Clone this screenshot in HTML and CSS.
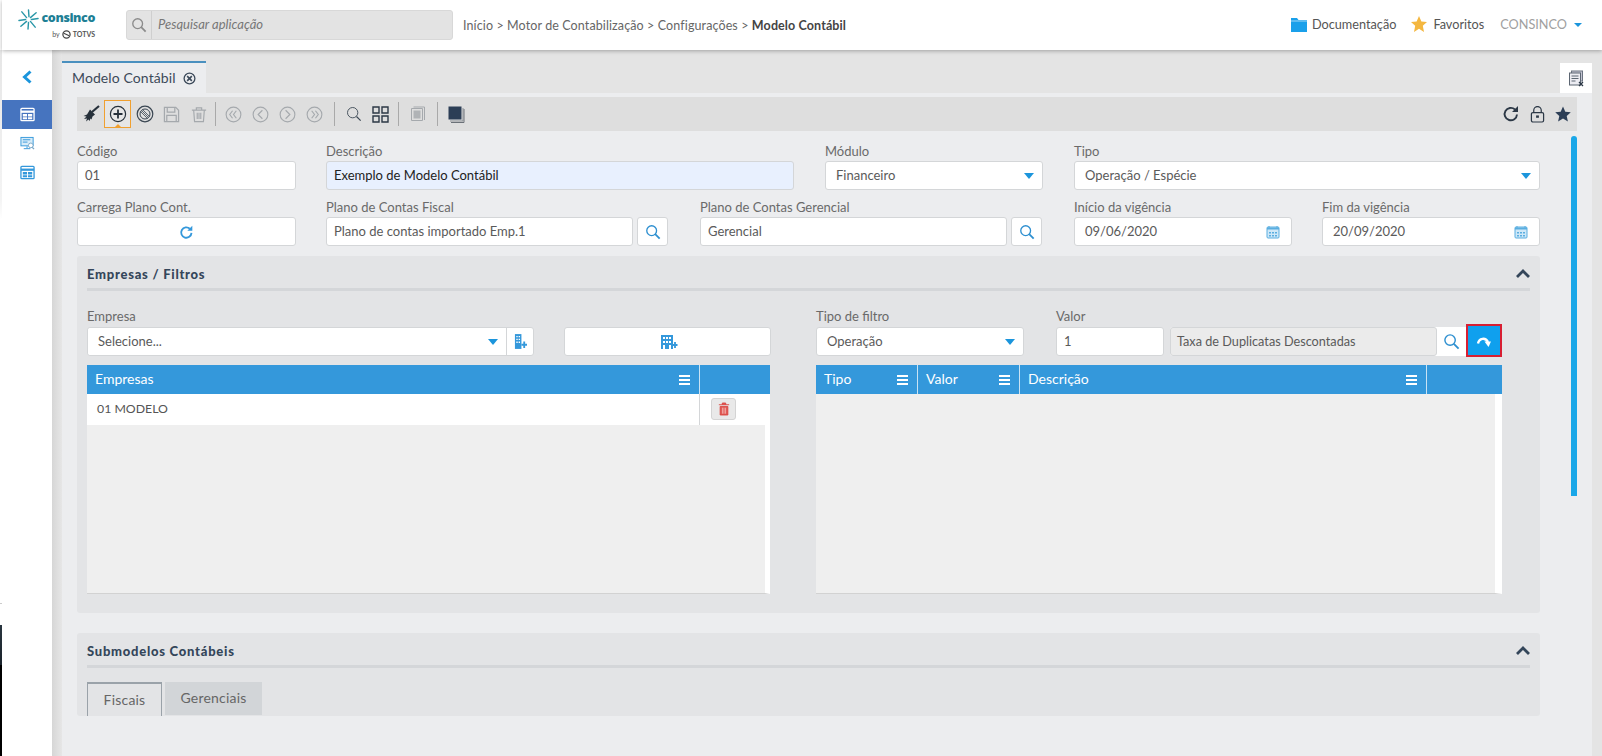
FILE: index.html
```html
<!DOCTYPE html>
<html lang="pt-BR">
<head>
<meta charset="utf-8">
<title>Modelo Contábil</title>
<link rel="stylesheet" href="styles.css">
</head>
<body>
<svg class="defs" aria-hidden="true">
  <symbol id="cal" viewBox="0 0 14 14"><rect x="1" y="2" width="12" height="11" rx="1" fill="#cfe8f8" stroke="#5aaee0"/><path d="M1 3.500h12" stroke="#5aaee0" stroke-width="2"/><path d="M3 1v2M11 1v2" stroke="#5aaee0"/><path d="M3 7h2v1.500H3zM6 7h2v1.500H6zM9 7h2v1.500H9zM3 10h2v1.500H3zM6 10h2v1.500H6zM9 10h2v1.500H9z" fill="#5aaee0"/></symbol>
  <symbol id="lupa" viewBox="0 0 18 18"><circle cx="7.500" cy="7.500" r="5.500" fill="none" stroke="currentColor" stroke-width="1.500"/><path d="M11.500 11.500l5 5" stroke="currentColor" stroke-width="2"/></symbol>
  <symbol id="caret" viewBox="0 0 12 7"><path d="M0 0h12L6 7z" fill="currentColor"/></symbol>
  <symbol id="menu" viewBox="0 0 11 10"><path d="M0 1h11M0 5h11M0 9h11" stroke="currentColor" stroke-width="1.800"/></symbol>
  <symbol id="up" viewBox="0 0 14 9"><path d="M1 8l6-6 6 6" fill="none" stroke="currentColor" stroke-width="2.800"/></symbol>
  <symbol id="tbl" viewBox="0 0 16 16"><rect x="1" y="1.500" width="14" height="13" rx="1" fill="none" stroke="currentColor" stroke-width="1.400"/><path d="M1 5h14" stroke="currentColor" stroke-width="2.400"/><path d="M3 7.500h4.500v2.500H3zM8.500 7.500H13v2.500H8.500zM3 11h4.500v2H3zM8.500 11H13v2H8.500z" fill="currentColor"/></symbol>
</svg>
<div class="strip"></div>
<div class="app">
  <header class="top">
    <div class="logo">
      <svg class="logo-mark" viewBox="0 0 22 22" width="21" height="21"><path d="M11 1l.5 7M11 14l-.5 7M1 12l7-1M14 11l7-1M4 3l5 6M13 13l5 6M19 4l-6 5M9 13l-6 5" stroke="#2a97a8" stroke-width="1.500" stroke-linecap="round"/></svg>
      <div class="logo-text">
        <span class="logo-name">consinco</span>
        <span class="logo-by">by <svg viewBox="0 0 10 10" width="9" height="9"><circle cx="5" cy="5" r="4" fill="none" stroke="#444" stroke-width="1.400"/><path d="M2 3.500l6 3" stroke="#444" stroke-width="1.200"/></svg> <b>TOTVS</b></span>
      </div>
    </div>
    <div class="search">
      <span class="search-ico"><svg width="16" height="16"><use href="#lupa"/></svg></span>
      <span class="search-ph">Pesquisar aplicação</span>
    </div>
    <nav class="crumbs">Início &gt; Motor de Contabilização &gt; Configurações &gt; <b>Modelo Contábil</b></nav>
    <div class="top-right">
      <svg class="folder" viewBox="0 0 16 14" width="16" height="14"><path d="M0 0h6l1.500 2H16v12H0z" fill="#1aa0ea"/><path d="M0 3h16" stroke="#fff" stroke-width=".6"/></svg>
      <span class="top-link">Documentação</span>
      <svg class="top-star" viewBox="0 0 16 16" width="16" height="16"><path d="M8 0l2.400 5.400 5.600.6-4.200 3.800L13 16 8 12.800 3 16l1.200-6.200L0 6l5.600-.6z" fill="#f4b740"/></svg>
      <span class="top-link">Favoritos</span>
      <span class="user">CONSINCO</span>
      <svg class="user-caret" viewBox="0 0 8 4" width="8" height="4"><path d="M0 0h8L4 4z" fill="currentColor"/></svg>
    </div>
  </header>
  <div class="main">
    <aside class="side">
      <div class="side-back"><svg viewBox="0 0 12 14" width="12" height="14"><path d="M9.500 1.500L3.500 7l6 5.500" fill="none" stroke="#1b95dc" stroke-width="3"/></svg></div>
      <div class="side-item active"><svg width="15" height="15"><use href="#tbl"/></svg></div>
      <div class="side-item"><svg viewBox="0 0 16 16" width="15" height="15"><rect x="1" y="1.500" width="13" height="9" fill="#d8ecf8" stroke="#3498db"/><path d="M3 4h8M3 6.500h5M4 13.500h7M7.500 11v2" stroke="#3498db"/><circle cx="11.500" cy="10" r="2.500" fill="#fff" stroke="#7aa7c7"/><path d="M13 12l2 2" stroke="#7aa7c7" stroke-width="1.400"/></svg></div>
      <div class="side-item"><svg width="15" height="15"><use href="#tbl"/></svg></div>
    </aside>
    <section class="work">
      <div class="tabstrip">
        <div class="tab">Modelo Contábil
          <svg viewBox="0 0 14 14" width="13" height="13"><circle cx="7" cy="7" r="5.800" fill="none" stroke="#3c4a5a" stroke-width="1.400"/><path d="M4.500 4.500l5 5M9.500 4.500l-5 5" stroke="#3c4a5a" stroke-width="1.700"/></svg>
        </div>
        <div class="closeall"><svg viewBox="0 0 17 17" width="17" height="17"><rect x="3.500" y="1" width="11" height="10" fill="#c4c4d2" stroke="#6a7280"/><rect x="1.500" y="3" width="11" height="12" fill="#ececf2" stroke="#5c6672"/><path d="M3.500 6h7M3.500 8.500h7M3.500 11h4" stroke="#5c6672"/><path d="M11 12l4 4M15 12l-4 4" stroke="#2c3846" stroke-width="1.300"/></svg></div>
      </div>
      <div class="sheet">
        <div class="toolbar">
          <button class="tb"><svg viewBox="0 0 18 18" width="18" height="18"><path d="M17 1l-7 6" stroke="#26303a" stroke-width="2.200"/><path d="M8 4.500l5 5-2.500 2-1 3-1-1-1 2.500-1-1.500-2.500 2 1-3-3 .5 2.500-2.500-3-.5 3.500-1.500z" fill="#26303a"/></svg></button>
          <button class="tb on"><svg viewBox="0 0 18 18" width="18" height="18"><circle cx="9" cy="9" r="7.600" fill="none" stroke="#26303a" stroke-width="1.200"/><path d="M9 4.500v9M4.500 9h9" stroke="#26303a" stroke-width="1.800"/></svg></button>
          <button class="tb"><svg viewBox="0 0 18 18" width="18" height="18"><circle cx="9" cy="9" r="7.800" fill="none" stroke="#3a4652" stroke-width="1.200"/><circle cx="9" cy="9" r="5" fill="none" stroke="#3a4652" stroke-width="1"/><path d="M5.500 5.500l7 7M6.500 4.500l7 7M4.500 6.500l7 7" stroke="#3a4652" stroke-width=".8"/></svg></button>
          <button class="tb"><svg viewBox="0 0 18 18" width="17" height="17"><path d="M1.500 1.500h12l3 3v12h-15z" fill="none" stroke="#a5a9ad" stroke-width="1.300"/><path d="M4.500 2v4.500h8V2M4 16v-6h10v6" fill="none" stroke="#a5a9ad" stroke-width="1.300"/></svg></button>
          <button class="tb"><svg viewBox="0 0 18 18" width="16" height="17"><path d="M1 4h16M6 4V1.500h6V4M3 4l1 13h10l1-13M7 7v7M9 7v7M11 7v7" fill="none" stroke="#a5a9ad" stroke-width="1.300"/></svg></button>
          <i class="tsep s1"></i>
          <button class="tb"><svg viewBox="0 0 18 18" width="17" height="17"><circle cx="9" cy="9" r="7.800" fill="none" stroke="#a5a9ad" stroke-width="1.200"/><path d="M8 5L5 9l3 4M12 5L9 9l3 4" fill="none" stroke="#a5a9ad" stroke-width="1.200"/></svg></button>
          <button class="tb"><svg viewBox="0 0 18 18" width="17" height="17"><circle cx="9" cy="9" r="7.800" fill="none" stroke="#a5a9ad" stroke-width="1.200"/><path d="M11 4.500L6.500 9l4.500 4.500" fill="none" stroke="#a5a9ad" stroke-width="1.200"/></svg></button>
          <button class="tb"><svg viewBox="0 0 18 18" width="17" height="17"><circle cx="9" cy="9" r="7.800" fill="none" stroke="#a5a9ad" stroke-width="1.200"/><path d="M7 4.500L11.500 9 7 13.500" fill="none" stroke="#a5a9ad" stroke-width="1.200"/></svg></button>
          <button class="tb"><svg viewBox="0 0 18 18" width="17" height="17"><circle cx="9" cy="9" r="7.800" fill="none" stroke="#a5a9ad" stroke-width="1.200"/><path d="M6 5l3 4-3 4M10 5l3 4-3 4" fill="none" stroke="#a5a9ad" stroke-width="1.200"/></svg></button>
          <i class="tsep s2"></i>
          <button class="tb"><svg viewBox="0 0 18 18" width="16" height="16"><circle cx="7.500" cy="7.500" r="5.800" fill="none" stroke="#3a4652" stroke-width="1"/><path d="M11.800 11.800l4.700 4.700" stroke="#3a4652" stroke-width="1.300"/></svg></button>
          <button class="tb"><svg viewBox="0 0 17 17" width="17" height="17"><path d="M1 1h6v6H1zM10 1h6v6h-6zM1 10h6v6H1zM10 10h6v6h-6z" fill="none" stroke="#2c3846" stroke-width="1.400"/></svg></button>
          <i class="tsep s3"></i>
          <button class="tb"><svg viewBox="0 0 16 17" width="16" height="17"><path d="M1.500 2.500h11v12h-11z" fill="#dedede" stroke="#a5a9ad"/><path d="M3.500 1h11v13" fill="none" stroke="#a5a9ad"/><rect x="3.500" y="4.500" width="7" height="8" fill="#b0b3b6"/></svg></button>
          <i class="tsep s4"></i>
          <button class="tb"><svg viewBox="0 0 17 17" width="17" height="17"><path d="M16 3v13.500H3" fill="none" stroke="#6b7178" stroke-width="1"/><path d="M15 2v13H2" fill="none" stroke="#8b9096" stroke-width="1"/><rect x="0.500" y="0.500" width="13" height="13" fill="#2c3e56"/></svg></button>
          <span class="tb-fill"></span>
          <button class="tb tr"><svg viewBox="0 0 18 18" width="18" height="18"><path d="M15 9.500A6.200 6.200 0 1 1 13 4.500" fill="none" stroke="#2c3846" stroke-width="1.900"/><path d="M16 1v6h-6z" fill="#2c3846"/></svg></button>
          <button class="tb tr"><svg viewBox="0 0 16 18" width="15" height="17"><rect x="1.500" y="7" width="13" height="10" rx="1.500" fill="none" stroke="#2c3846" stroke-width="1.300"/><path d="M4 7V4.500a4 4 0 0 1 8 0V7" fill="none" stroke="#2c3846" stroke-width="1.300"/><rect x="6.500" y="10" width="3" height="2.500" fill="#2c3846"/></svg></button>
          <button class="tb tr"><svg viewBox="0 0 16 16" width="16" height="16"><path d="M8 .5l2.300 5.200 5.500.5-4.100 3.700 1.200 5.600L8 12.600l-4.900 2.900 1.200-5.600L.2 6.200l5.500-.5z" fill="#2c3e56"/></svg></button>
        </div>
        <div class="scrollarea">
          <div class="form">
            <div class="row r1">
              <div class="field w219"><label>Código</label><div class="input plain">01</div></div>
              <div class="field w467"><label>Descrição</label><div class="input auto">Exemplo de Modelo Contábil</div></div>
              <div class="field w218"><label>Módulo</label><div class="input select">Financeiro<svg><use href="#caret"/></svg></div></div>
              <div class="field w466"><label>Tipo</label><div class="input select">Operação / Espécie<svg><use href="#caret"/></svg></div></div>
            </div>
            <div class="row r2">
              <div class="field w219"><label>Carrega Plano Cont.</label><div class="input center"><svg viewBox="0 0 18 18" width="15" height="15"><path d="M15 9.500A6.200 6.200 0 1 1 13 4.500" fill="none" stroke="#3498db" stroke-width="2.200"/><path d="M16 1v6h-6z" fill="#3498db"/></svg></div></div>
              <div class="field w342"><label>Plano de Contas Fiscal</label><div class="group"><div class="input grow">Plano de contas importado Emp.1</div><div class="addon"><svg width="16" height="16"><use href="#lupa"/></svg></div></div></div>
              <div class="field w341"><label>Plano de Contas Gerencial</label><div class="group"><div class="input grow">Gerencial</div><div class="addon"><svg width="16" height="16"><use href="#lupa"/></svg></div></div></div>
              <div class="field w217"><label>Início da vigência</label><div class="input date">09/06/2020<svg width="14" height="14"><use href="#cal"/></svg></div></div>
              <div class="field w218b"><label>Fim da vigência</label><div class="input date">20/09/2020<svg width="14" height="14"><use href="#cal"/></svg></div></div>
            </div>
            <section class="panel p-emp">
              <h2>Empresas / Filtros<svg width="14" height="9"><use href="#up"/></svg></h2>
              <div class="split">
                <div class="col">
                  <div class="row fr">
                    <div class="field w447"><label>Empresa</label>
                      <div class="joined"><div class="input select grow">Selecione...<svg><use href="#caret"/></svg></div><div class="j-add"><svg viewBox="0 0 14 18" width="13" height="17"><path d="M1 1h7v16H1z" fill="#3498db"/><path d="M2.500 3h1.500v1.500H2.500zM5 3h1.500v1.500H5zM2.500 6h1.500v1.500H2.500zM5 6h1.500v1.500H5zM2.500 9h1.500v1.500H2.500zM5 9h1.500v1.500H5z" fill="#fff"/><path d="M11 9v7M8 12.500h6" stroke="#3498db" stroke-width="2"/></svg></div></div>
                    </div>
                    <div class="field w207"><label>&nbsp;</label><div class="input center"><svg viewBox="0 0 20 16" width="20" height="16"><path d="M3 1h12v14H3z" fill="#3498db"/><path d="M5 3h2v2H5zM8 3h2v2H8zM11 3h2v2h-2zM5 7h2v2H5zM8 7h2v2H8zM11 7h2v2h-2zM5 11h2v4H5zM11 11h2v4h-2z" fill="#fff"/><path d="M17 8v6M14.500 11h5" stroke="#3498db" stroke-width="1.800"/></svg></div></div>
                  </div>
                  <div class="grid">
                    <div class="ghead g-left"><div class="gh">Empresas<svg width="11" height="10"><use href="#menu"/></svg></div><div class="gh"></div></div>
                    <div class="gbody">
                      <div class="grow-row"><div class="gcell">01 MODELO</div><div class="gact"><span class="del"><svg viewBox="0 0 14 16" width="12" height="14"><path d="M1 3h12M5 3V1h4v2M2.500 5h9v10h-9z" fill="#e05a55" stroke="#d9423d"/><path d="M5.200 6.500v7M7 6.500v7M8.800 6.500v7" stroke="#fbd5d3" stroke-width=".7"/></svg></span></div></div>
                    </div>
                  </div>
                </div>
                <div class="col">
                  <div class="row fr">
                    <div class="field w208"><label>Tipo de filtro</label><div class="input select">Operação<svg><use href="#caret"/></svg></div></div>
                    <div class="field w108"><label>Valor</label><div class="input plain">1</div></div>
                    <div class="field w333">
                      <label>&nbsp;</label>
                      <div class="joined jr">
                        <div class="input ro grow">Taxa de Duplicatas Descontadas</div>
                        <div class="j-search"><svg width="17" height="17"><use href="#lupa"/></svg></div>
                        <div class="go"><svg viewBox="0 0 16 14" width="16" height="14"><path d="M2 8.500C3 3 9.500 2 12 7" fill="none" stroke="#fff" stroke-width="2.400"/><path d="M8.500 6.500H15L12.500 12z" fill="#fff"/></svg></div>
                      </div>
                    </div>
                  </div>
                  <div class="grid">
                    <div class="ghead g-right">
                      <div class="gh">Tipo<svg width="11" height="10"><use href="#menu"/></svg></div>
                      <div class="gh">Valor<svg width="11" height="10"><use href="#menu"/></svg></div>
                      <div class="gh">Descrição<svg width="11" height="10"><use href="#menu"/></svg></div>
                      <div class="gh"></div>
                    </div>
                    <div class="gbody"></div>
                  </div>
                </div>
              </div>
            </section>
            <section class="panel p-sub">
              <h2>Submodelos Contábeis<svg width="14" height="9"><use href="#up"/></svg></h2>
              <div class="subtabs">
                <div class="st active">Fiscais</div>
                <div class="st">Gerenciais</div>
              </div>
            </section>
          </div>
          <div class="vscroll"></div>
        </div>
      </div>
    </section>
  </div>
</div>
</body>
</html>
```

FILE: styles.css
```css
* { box-sizing: border-box; }
html, body { margin: 0; height: 100%; }
body {
  width: 1602px; height: 756px; overflow: hidden; display: flex;
  font: 13px/1.2 Lato, "Open Sans", sans-serif; color: #555; background: #fff;
}
.defs { width: 0; height: 0; position: absolute; }
.strip {
  width: 2px; height: 756px; flex: none;
  background: linear-gradient(#fff 0, #fff 50px, #e6e6e6 50px, #f4f4f4 200px, #fff 220px, #fff 603px, #ccc 603px, #ccc 604px, #fff 604px, #fff 625px, #2a3640 625px, #1a232b 665px, #000 665px);
}
.app { flex: 1; display: flex; flex-direction: column; min-width: 0; }

/* Header */
.top {
  height: 50px; flex: none; display: flex; align-items: center; background: #fff;
  box-shadow: 0 1px 4px rgba(0,0,0,.3); position: relative; z-index: 2; padding-left: 16px;
}
.logo { width: 108px; flex: none; display: flex; gap: 4px; align-items: flex-start; margin-top: -2px; }
.logo-text { display: flex; flex-direction: column; align-items: flex-end; width: 52px; }
.logo-name { font: 800 12.500px/16px "Open Sans", sans-serif; color: #1d7f95; letter-spacing: -.4px; margin-top: 1px; }
.logo-by { font-size: 7px; line-height: 11px; margin-top: 3px; color: #555; display: flex; align-items: center; gap: 2px; white-space: nowrap; }
.search {
  width: 327px; height: 30px; flex: none; display: flex; align-items: center; background: #e3e3e3;
  border: 1px solid #d8d8d8; border-radius: 3px;
}
.search-ico { width: 25px; height: 28px; display: flex; align-items: center; justify-content: center; color: #8b8b8b; border-right: 1px solid #cfcfcf; }
.search-ph { padding-left: 6px; font-style: italic; font-size: 13px; color: #777; }
.crumbs { margin-left: 10px; color: #666; font-size: 12.500px; letter-spacing: .11px; white-space: nowrap; }
.crumbs b { color: #444; }
.top-right { margin-left: auto; display: flex; align-items: center; padding-right: 20px; }
.folder { margin-right: 5px; }
.top-link { color: #555; font-size: 12.700px; }
.top-star { margin: -2px 6px 0 15px; }
.user { margin-left: 16px; color: #a0a0a0; font-size: 12.700px; }
.user-caret { margin-left: 7px; color: #1b95dc; }

/* Layout */
.main { flex: 1; display: flex; min-height: 0; }
.side { width: 50px; flex: none; background: #fff; display: flex; flex-direction: column; align-items: stretch; }
.side-back { height: 50px; display: flex; align-items: center; justify-content: center; padding-top: 4px; }
.side-item { height: 29px; display: flex; align-items: center; justify-content: center; color: #3498db; }
.side-item.active { background: #4674bf; color: #fff; }
.work {
  flex: 1; display: flex; flex-direction: column; min-width: 0; padding: 0 10px;
  background: #e4e4e4; background-image: linear-gradient(90deg, #d6d6d6, #e6e6e6 10px); background-size: 10px 100%; background-repeat: no-repeat;
}

/* Tabs */
.tabstrip { height: 43px; flex: none; display: flex; align-items: flex-end; justify-content: space-between; }
.tab {
  width: 144px; height: 32px; background: #ecedef; border-top: 2px solid #4a90bf; display: flex; align-items: center;
  padding-left: 10px; gap: 7px; font-size: 14px; color: #3c4a5a; letter-spacing: .1px; white-space: nowrap;
}
.closeall { width: 32px; height: 30px; background: #fff; display: flex; align-items: center; justify-content: center; }
.sheet { flex: 1; min-height: 0; background: #ecedef; padding: 4px 15px 0; display: flex; flex-direction: column; }

/* Toolbar */
.toolbar { height: 34px; flex: none; background: #dedede; display: flex; align-items: center; padding-right: 1px; }
.tb { width: 27px; height: 34px; flex: none; padding: 0; border: 0; background: none; display: flex; align-items: center; justify-content: center; position: relative; }
.tb.on { height: 28px; border: 1px solid #f0a030; background: #e6e6e6; }
.tb.on::after { content: ""; position: absolute; bottom: 0; left: 10px; border: 3px solid transparent; border-bottom-color: #f0a030; border-top: 0; }
.tb.tr { width: 26px; }
.tb-fill { flex: 1; }
.tsep { width: 1px; height: 24px; flex: none; background: #a9a9a9; }
.s1 { margin: 0 4px 0 3px; }
.s2 { margin: 0 5px 0 6px; }
.s3 { margin: 0 5px 0 4px; }
.s4 { margin: 0 5px 0 6px; }

/* Form */
.scrollarea { flex: 1; min-height: 0; display: flex; overflow: hidden; align-items: flex-start; height: 585px; max-height: 585px; }
.form { width: 1463px; flex: none; padding-top: 12px; }
.vscroll { width: 6px; height: 360px; margin: 5px 0 0 31px; background: #1aa7e8; border-radius: 3px 3px 0 0; flex: none; }
.row { display: flex; }
.r1 { gap: 31px; }
.r2 { margin-top: 9px; gap: 32px; }
.field { flex: none; display: flex; flex-direction: column; }
.field label { height: 18px; line-height: 16px; color: #6a6a6a; }
.fr .field label { line-height: 14px; }
.w219 { width: 219px; } .w467 { width: 468px; } .w218 { width: 218px; } .w466 { width: 466px; }
.r1 .w219 { margin-right: -1px; }
.w342 { width: 342px; } .w341 { width: 342px; } .w217 { width: 218px; } .w218b { width: 218px; }
.r2 .w219 { margin-right: -2px; }
.r2 .w217 { margin-right: -2px; }
.input {
  height: 29px; background: #fff; border: 1px solid #d4d6d8; border-radius: 3px; display: flex; align-items: center;
  padding: 1px 10px 0; font-size: 13px; color: #5a5a5a; white-space: nowrap; min-width: 0;
}
.input.plain { padding-left: 7px; }
.input.auto { background: #e8f0fe; color: #222; padding-left: 7px; }
.select { justify-content: space-between; padding-right: 8px; }
.select svg { width: 10px; height: 6px; color: #1b95dc; flex: none; }
.center { justify-content: center; }
.date { justify-content: space-between; padding: 1px 11px 0 10px; }
.group { display: flex; gap: 4px; }
.grow { flex: 1; }
.group .input { padding-left: 7px; }
.addon { width: 31px; height: 29px; flex: none; background: #fff; border: 1px solid #d4d6d8; border-radius: 3px; color: #2d8fd0; display: flex; align-items: center; justify-content: center; }

/* Panels */
.panel { background: #e3e4e6; border-radius: 3px; padding: 0 10px; }
.panel h2 {
  margin: 0; height: 35px; border-bottom: 3px solid #d4d6d9; display: flex; align-items: center; justify-content: space-between;
  font: 900 13px Lato, sans-serif; color: #34465a; letter-spacing: .75px; padding: 3px 0 0 0;
}
.panel h2 svg { color: #34465a; }
.p-emp { margin-top: 10px; padding-bottom: 19px; }
.p-sub { margin-top: 20px; height: 83px; overflow: hidden; }
.split { display: flex; justify-content: space-between; padding-top: 18px; }
.col { width: 686px; margin-right: 28px; flex: none; }
.col:first-child { width: 683px; margin-right: 0; }
.fr { gap: 32px; }
.w447 { width: 447px; } .w207 { width: 207px; margin-left: -2px; }
.w208 { width: 208px; } .w108 { width: 108px; } .w333 { width: 332px; margin-left: -26px; }
.joined { display: flex; height: 29px; background: #fff; border: 1px solid #d4d6d8; border-radius: 3px; }
.joined .input { border: 0; height: 27px; }
.j-add { width: 27px; border-left: 1px solid #d4d6d8; display: flex; align-items: center; justify-content: center; }
.jr { background: #fff; border: 0; position: relative; }
.jr .input.ro { background: #ebebeb; border: 1px solid #d4d6d8; height: 29px; padding: 1px 9px 0 6px; font-size: 12.700px; }
.j-search { width: 29px; height: 29px; flex: none; color: #2d8fd0; display: flex; align-items: center; justify-content: center; }
.go {
  width: 36px; height: 33px; flex: none; margin-top: -3px; margin-bottom: -1px; padding-top: 3px; background: #0fa0ee; border: 2px solid #d81e32;
  display: flex; align-items: center; justify-content: center;
}
.grid { margin-top: 9px; }
.ghead { height: 29px; background: #3498db; color: #fff; display: grid; font-size: 14px; }
.g-left { grid-template-columns: 613px 1fr; }
.g-right { grid-template-columns: 102px 102px 407px 1fr; }
.gh { display: flex; align-items: center; justify-content: space-between; padding: 0 8px; border-right: 1px solid #c9e3f4; }
.gh:last-child { border-right: 0; }
.gh svg { color: #fff; margin-right: 1px; }
.gbody { height: 200px; background: #efefef; border-bottom: 1px solid #d2d2d2; border-right: 5px solid #fff; }
.col:last-child .gbody { border-right-width: 7px; }
.grow-row { display: flex; height: 31px; background: #fff; margin-right: -5px; }
.gcell { width: 613px; display: flex; align-items: center; padding-left: 10px; font-size: 12.300px; color: #555; border-right: 1px solid #d4d6d8; }
.gact { flex: 1; display: flex; justify-content: flex-start; align-items: flex-start; padding: 4px 0 0 11px; }
.del { width: 25px; height: 22px; display: flex; align-items: center; justify-content: center; background: #e9e9e9; border: 1px solid #d4d4d4; border-radius: 3px; }

/* Sub tabs */
.subtabs { display: flex; gap: 3px; margin-top: 14px; align-items: flex-start; }
.st { height: 33px; width: 97px; background: #d2d5d8; display: flex; align-items: center; justify-content: center; color: #666; font-size: 14px; letter-spacing: .2px; }
.st.active { width: 75px; height: 40px; background: #e3e4e6; border: 1px solid #9aa2a9; border-top-width: 2px; border-bottom: 0; padding-bottom: 5px; }
```
